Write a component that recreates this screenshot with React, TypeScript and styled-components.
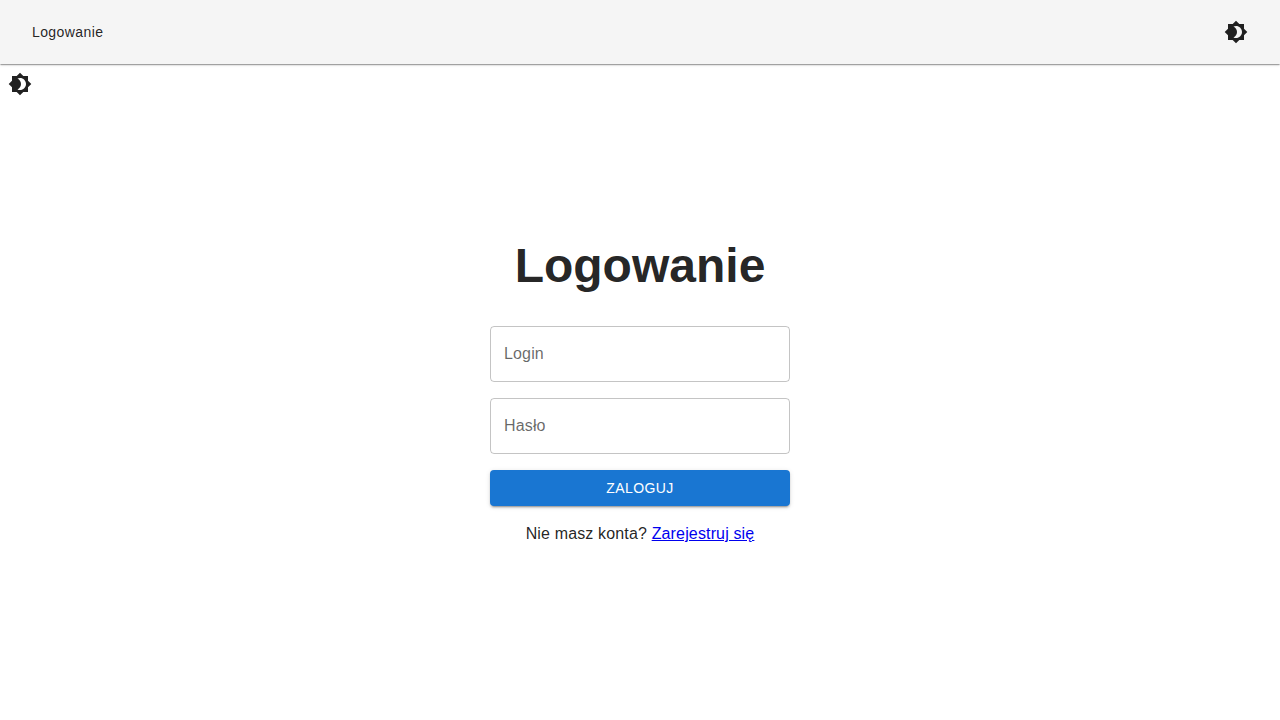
import React from "react";
import styled, { createGlobalStyle } from "styled-components";

const GlobalStyle = createGlobalStyle`
  *, *::before, *::after { box-sizing: border-box; }
  body {
    margin: 0;
    background: #fff;
    color: rgba(0, 0, 0, 0.87);
    font-family: "Liberation Sans", Arial, sans-serif;
    font-size: 16px;
    line-height: 1.5;
    letter-spacing: 0.00938em;
  }
`;

const Page = styled.div`
  display: flex;
  flex-direction: column;
  height: 100vh;
  overflow: hidden;
`;

const AppBar = styled.header`
  display: flex;
  flex: none;
  align-items: center;
  justify-content: space-between;
  height: 64px;
  padding: 0 24px;
  background: #f5f5f5;
  box-shadow: 0 2px 1px -1px rgba(0, 0, 0, 0.2), 0 1px 1px 0 rgba(0, 0, 0, 0.14),
    0 1px 3px 0 rgba(0, 0, 0, 0.12);
`;

const NavButton = styled.button`
  padding: 6px 8px;
  border: 0;
  background: transparent;
  color: inherit;
  font: 400 14px/1.75 "Liberation Sans", Arial, sans-serif;
  letter-spacing: 0.02857em;
  cursor: pointer;
`;

const IconButton = styled.button`
  display: flex;
  flex: none;
  padding: 8px;
  border: 0;
  background: transparent;
  color: inherit;
  cursor: pointer;
`;

const Main = styled.main`
  display: flex;
  flex: 1;
  flex-direction: column;
  align-items: flex-start;
`;

const Form = styled.form`
  display: flex;
  flex-direction: column;
  align-self: center;
  gap: 16px;
  width: 300px;
  margin-top: 134px;
`;

const Title = styled.h1`
  margin: 0 0 16px;
  font-size: 48px;
  font-weight: 700;
  line-height: 56px;
  letter-spacing: 0;
  text-align: center;
`;

const Field = styled.input`
  height: 56px;
  padding: 0 13px;
  border: 1px solid rgba(0, 0, 0, 0.23);
  border-radius: 4px;
  background: transparent;
  color: inherit;
  font: inherit;
  letter-spacing: inherit;
  &::placeholder {
    color: rgba(0, 0, 0, 0.6);
    opacity: 1;
  }
`;

const SubmitButton = styled.button`
  height: 36px;
  border: 0;
  border-radius: 4px;
  background: #1976d2;
  color: #fff;
  font: 400 14px/1.75 "Liberation Sans", Arial, sans-serif;
  letter-spacing: 0.02857em;
  text-transform: uppercase;
  box-shadow: 0 3px 1px -2px rgba(0, 0, 0, 0.2), 0 2px 2px 0 rgba(0, 0, 0, 0.14),
    0 1px 5px 0 rgba(0, 0, 0, 0.12);
  cursor: pointer;
`;

const Hint = styled.p`
  margin: 0;
  text-align: center;
`;

const Link = styled.a`
  color: #0000ee;
  text-decoration: underline;
`;

const ThemeIcon = () => (
  <svg width="24" height="24" viewBox="0 0 24 24" fill="currentColor" aria-hidden="true">
    <path d="M20 8.69V4h-4.69L12 .69 8.69 4H4v4.69L.69 12 4 15.31V20h4.69L12 23.31 15.31 20H20v-4.69L23.31 12 20 8.69zM12 18c-.89 0-1.74-.2-2.5-.55C11.56 16.5 13 14.42 13 12s-1.44-4.5-3.5-5.45C10.26 6.2 11.11 6 12 6c3.31 0 6 2.69 6 6s-2.69 6-6 6z" />
  </svg>
);

const Toggle = () => (
  <IconButton type="button" aria-label="Motyw">
    <ThemeIcon />
  </IconButton>
);

export default function App() {
  return (
    <Page>
      <GlobalStyle />
      <AppBar>
        <NavButton type="button">Logowanie</NavButton>
        <Toggle />
      </AppBar>
      <Main>
        <Toggle />
        <Form onSubmit={(e) => e.preventDefault()}>
          <Title>Logowanie</Title>
          <Field placeholder="Login" aria-label="Login" />
          <Field placeholder="Hasło" aria-label="Hasło" type="password" />
          <SubmitButton type="submit">Zaloguj</SubmitButton>
          <Hint>
            Nie masz konta? <Link href="#">Zarejestruj się</Link>
          </Hint>
        </Form>
      </Main>
    </Page>
  );
}
